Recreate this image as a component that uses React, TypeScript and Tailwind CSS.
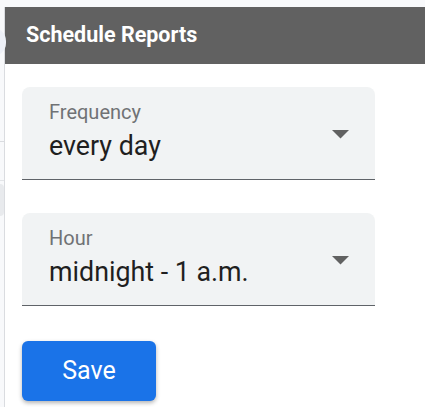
import React from "react";

function Field({ label, value }: { label: string; value: string }) {
  return (
    <div className="relative shrink-0 w-[353px] h-[93px] rounded-t-[8px] bg-[#f1f3f4] border-b border-[#5f6368] pl-[27px] pt-[12px]">
      <div className="text-[20px] leading-[26px] text-[#707275]">{label}</div>
      <div className="text-[26.8px] leading-[32px] text-[#1f1f1f] mt-[5px]">{value}</div>
      <svg className="absolute left-[310px] top-[43px]" width="17" height="9" viewBox="0 0 17 9">
        <path d="M0 0 L17 0 L8.5 8.5 Z" fill="#616161" />
      </svg>
    </div>
  );
}

export default function App() {
  return (
    <div className="w-[425px] h-[407px] overflow-hidden bg-[#f8f9fb] flex" style={{ fontFamily: "Roboto, 'Liberation Sans', sans-serif" }}>
      <div className="relative w-[4px] shrink-0">
        <div className="absolute left-[-20px] top-[28px] w-[26px] h-[28px] rounded-full bg-[#eef1f8]" />
        <div className="absolute left-0 top-[141px] w-[4px] h-px bg-[#dadce0]" />
        <div className="absolute left-0 top-[180px] w-[4px] h-px bg-[#e3e5e8]" />
        <div className="absolute left-[-6px] top-[184px] w-[10px] h-[32px] rounded-[4px] bg-[#e8eaed]" />
      </div>
      <div className="flex-1 mt-[7px] border-l border-[#dadce0] bg-white flex flex-col">
        <div className="shrink-0 h-[57px] bg-[#616161] flex items-center pl-[21px]">
          <span className="text-white font-bold text-[21.5px]">Schedule Reports</span>
        </div>
        <div className="shrink-0 pl-[17px] pt-[23px] flex flex-col gap-[33px]">
          <Field label="Frequency" value="every day" />
          <Field label="Hour" value="midnight - 1 a.m." />
        </div>
        <div className="shrink-0 pl-[17px] pt-[35px]">
          <button className="w-[134px] h-[60px] rounded-[6px] bg-[#1a73e8] text-white text-[25px] shadow-[0_2px_4px_rgba(0,0,0,0.3)]">
            Save
          </button>
        </div>
        <div className="shrink-0 pl-[60px] pt-[3px] text-[20px] leading-[26px] text-[#3c3cff] whitespace-nowrap">
          Schedule a report to be sent by email
        </div>
      </div>
    </div>
  );
}
